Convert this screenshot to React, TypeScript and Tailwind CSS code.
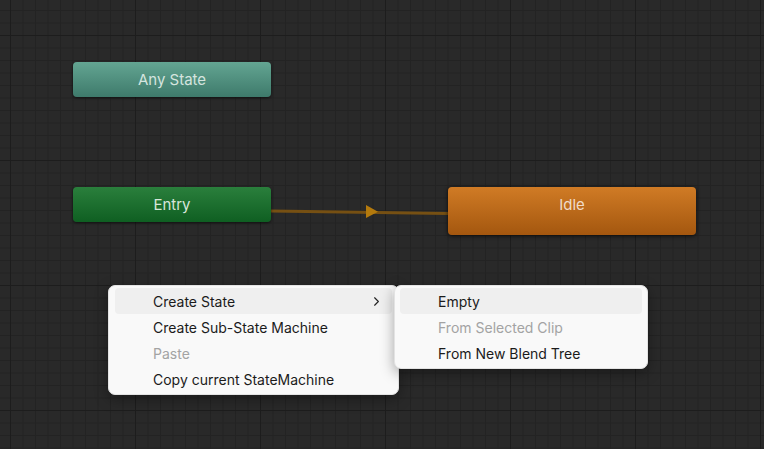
import { ChevronRight } from "lucide-react";

type MenuItem = {
  label: string;
  disabled?: boolean;
  active?: boolean;
  submenu?: boolean;
};

const mainItems: MenuItem[] = [
  { label: "Create State", active: true, submenu: true },
  { label: "Create Sub-State Machine" },
  { label: "Paste", disabled: true },
  { label: "Copy current StateMachine" },
];

const subItems: MenuItem[] = [
  { label: "Empty", active: true },
  { label: "From Selected Clip", disabled: true },
  { label: "From New Blend Tree" },
];

function Menu({ items, className }: { items: MenuItem[]; className: string }) {
  return (
    <div
      className={`absolute flex flex-col rounded-[7px] border border-[#e3e3e3] bg-[#f9f9f9] py-[2px] shadow-[0_4px_14px_rgba(0,0,0,0.35)] ${className}`}
    >
      {items.map((item) => (
        <div
          key={item.label}
          className={`flex h-[26px] items-center justify-between rounded-[4px] pl-[38px] pr-[8px] text-[14px] ${
            item.active ? "bg-[#efefef]" : ""
          } ${item.disabled ? "text-[#a3a3a3]" : "text-[#1b1b1b]"}`}
        >
          <span>{item.label}</span>
          {item.submenu && <ChevronRight className="h-[15px] w-[15px] text-[#222]" strokeWidth={1.8} />}
        </div>
      ))}
    </div>
  );
}

export default function App() {
  return (
    <div
      className="relative h-[449px] w-[764px] overflow-hidden bg-[#292929] bg-[linear-gradient(#1d1d1d_1px,transparent_1px),linear-gradient(90deg,#1d1d1d_1px,transparent_1px),linear-gradient(#232323_1px,transparent_1px),linear-gradient(90deg,#232323_1px,transparent_1px)] bg-size-[125px_125px,125px_125px,12.5px_12.5px,12.5px_12.5px] bg-position-[10px_35px,10px_35px,10px_35px,10px_35px]"
      style={{ fontFamily: "Inter, 'Noto Sans', sans-serif" }}
    >
      {/* transition */}
      <svg className="absolute left-0 top-0" width="764" height="449">
        <line x1="271" y1="211" x2="448" y2="213.5" stroke="#765013" strokeWidth="3" />
        <polygon points="366,205 378,211.7 366,218" fill="#b47a0d" />
      </svg>

      <div className="absolute left-[73px] top-[62px] flex h-[35px] w-[198px] items-center justify-center rounded-[4px] bg-[linear-gradient(#63a592,#3e7a6b)] pt-[1px] text-[15px] text-[#d5e4df] shadow-[0_1px_3px_rgba(0,0,0,0.6)]">
        Any State
      </div>

      <div className="absolute left-[73px] top-[187px] flex h-[35px] w-[198px] items-center justify-center rounded-[4px] bg-[linear-gradient(#2a7f3c,#0f5f22)] pt-[2px] text-[15px] text-[#d8e6da] shadow-[0_1px_3px_rgba(0,0,0,0.6)]">
        Entry
      </div>

      <div className="absolute left-[448px] top-[187px] flex h-[48px] w-[248px] justify-center rounded-[4px] bg-[linear-gradient(#d07b25,#a4570f)] pt-[7px] text-[15px] text-[#f0dcc8] shadow-[0_1px_4px_rgba(0,0,0,0.7)]">
        Idle
      </div>

      <Menu items={mainItems} className="left-[108px] top-[285px] w-[291px] px-[6px]" />
      <Menu items={subItems} className="left-[394px] top-[285px] w-[254px] px-[5px]" />
    </div>
  );
}
